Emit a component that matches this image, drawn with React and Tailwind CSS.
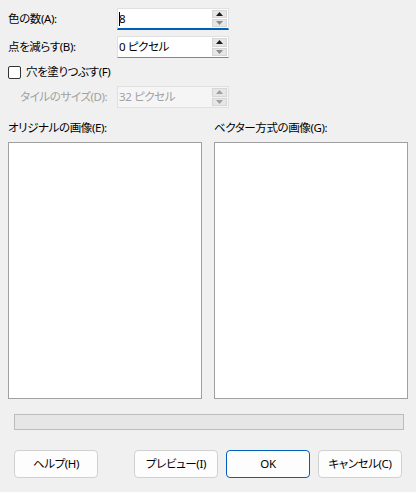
import React from "react";

function Spinner({ disabled }) {
  const up = disabled ? "#a0a0a0" : "#1a1a1a";
  const down = disabled ? "#a0a0a0" : "#8a8a8a";
  return (
    <div className="flex flex-col w-[16px] h-full py-[1px] gap-[1px] pr-[1px]">
      <div className="flex-1 flex items-center justify-center bg-[#e6e6e6] border border-[#d6d6d6]">
        <svg width="7" height="4" viewBox="0 0 7 4"><path d="M0 4 L3.5 0 L7 4 Z" fill={up} /></svg>
      </div>
      <div className="flex-1 flex items-center justify-center bg-[#e6e6e6] border border-[#d6d6d6]">
        <svg width="7" height="4" viewBox="0 0 7 4"><path d="M0 0 L3.5 4 L7 0 Z" fill={down} /></svg>
      </div>
    </div>
  );
}

function Field({ value, focused, disabled }) {
  return (
    <div
      className={
        "flex w-[112px] h-[22px] " +
        (disabled
          ? "bg-[#f5f5f5] border border-[#e0e0e0]"
          : focused
          ? "bg-white border-t border-x border-[#e0e0e0] border-b-2 border-b-[#005fb8]"
          : "bg-white border-t border-x border-[#e0e0e0] border-b border-b-[#868686]")
      }
    >
      <div
        className={
          "flex-1 flex items-center pl-[1px] whitespace-nowrap " +
          (disabled ? "text-[#a0a0a0]" : "text-black")
        }
      >
        {focused && <span className="w-[1px] h-[14px] bg-black mr-[-1px]" />}
        {value}
      </div>
      <Spinner disabled={disabled} />
    </div>
  );
}

function Btn({ children, def }) {
  return (
    <div
      className={
        "w-[84px] h-[28px] flex items-center justify-center rounded-[4px] bg-[#fdfdfd] text-black border whitespace-nowrap " +
        (def ? "border-[#005fb8]" : "border-[#d0d0d0]")
      }
    >
      {children}
    </div>
  );
}

export default function App() {
  return (
    <div
      className="w-[416px] h-[492px] bg-[#f0f0f0] text-[11.5px] tracking-[-0.4px] [font-feature-settings:'palt'] text-black overflow-hidden"
      style={{ fontFamily: '"Noto Sans", "Noto Sans CJK JP", sans-serif' }}
    >
      <div className="pl-[8px] pt-[8px] flex flex-col">
        <div className="flex items-center h-[22px]">
          <div className="w-[109px] whitespace-nowrap">色の数(A):</div>
          <Field value="8" focused />
        </div>
        <div className="flex items-center h-[22px] mt-[6px]">
          <div className="w-[109px] whitespace-nowrap">点を減らす(B):</div>
          <Field value="0 ピクセル" />
        </div>
        <div className="flex items-center h-[20px] mt-[4px]">
          <div className="w-[13px] h-[13px] border border-[#333] rounded-[2px] bg-white mr-[5px]" />
          <div className="whitespace-nowrap">穴を塗りつぶす(F)</div>
        </div>
        <div className="flex items-center h-[22px] mt-[4px]">
          <div className="w-[97px] ml-[12px] text-[#a0a0a0] whitespace-nowrap">タイルのサイズ(D):</div>
          <Field value="32 ピクセル" disabled />
        </div>
        <div className="flex mt-[12px] h-[16px] items-center">
          <div className="w-[206px] whitespace-nowrap">オリジナルの画像(E):</div>
          <div className="whitespace-nowrap">ベクター方式の画像(G):</div>
        </div>
        <div className="flex gap-[12px] mt-[6px]">
          <div className="w-[194px] h-[257px] bg-white border border-[#a0a0a0]" />
          <div className="w-[194px] h-[257px] bg-white border border-[#a0a0a0]" />
        </div>
        <div className="ml-[6px] mt-[15px] w-[390px] h-[16px] bg-[#e6e6e6] border border-[#bcbcbc]" />
        <div className="flex ml-[6px] mt-[20px]">
          <Btn>ヘルプ(H)</Btn>
          <div className="ml-[36px] flex gap-[8px]">
            <Btn>プレビュー(I)</Btn>
            <Btn def>OK</Btn>
            <Btn>キャンセル(C)</Btn>
          </div>
        </div>
      </div>
    </div>
  );
}
